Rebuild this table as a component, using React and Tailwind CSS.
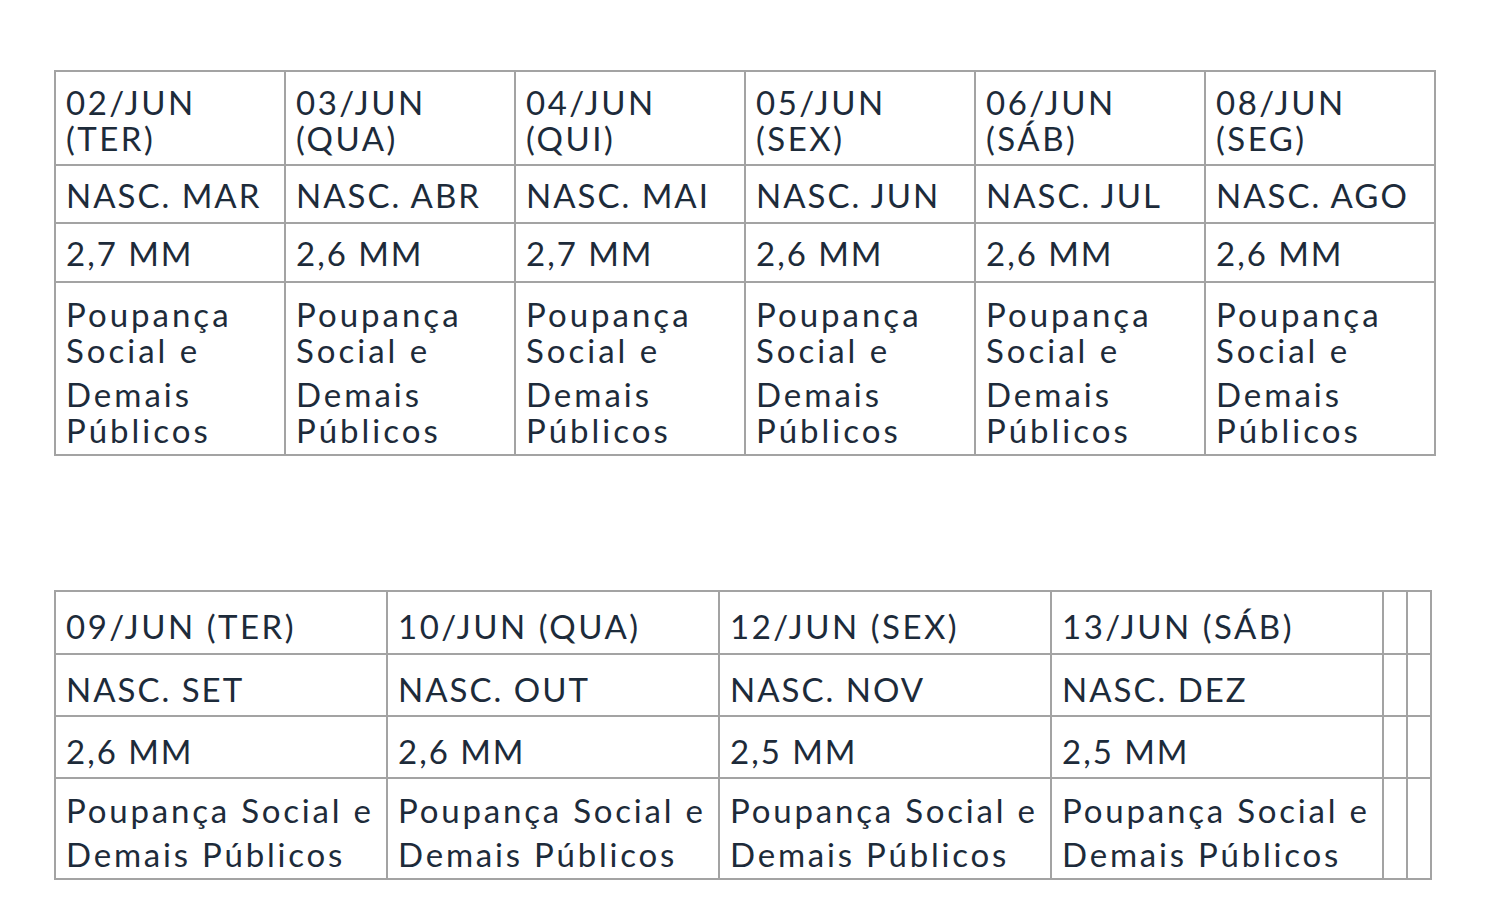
import React from 'react';

const first = [
  { date: ['02/JUN', '(TER)'], nasc: 'NASC. MAR', val: '2,7 MM' },
  { date: ['03/JUN', '(QUA)'], nasc: 'NASC. ABR', val: '2,6 MM' },
  { date: ['04/JUN', '(QUI)'], nasc: 'NASC. MAI', val: '2,7 MM' },
  { date: ['05/JUN', '(SEX)'], nasc: 'NASC. JUN', val: '2,6 MM' },
  { date: ['06/JUN', '(SÁB)'], nasc: 'NASC. JUL', val: '2,6 MM' },
  { date: ['08/JUN', '(SEG)'], nasc: 'NASC. AGO', val: '2,6 MM' },
];

const second = [
  { date: '09/JUN (TER)', nasc: 'NASC. SET', val: '2,6 MM' },
  { date: '10/JUN (QUA)', nasc: 'NASC. OUT', val: '2,6 MM' },
  { date: '12/JUN (SEX)', nasc: 'NASC. NOV', val: '2,5 MM' },
  { date: '13/JUN (SÁB)', nasc: 'NASC. DEZ', val: '2,5 MM' },
];

const cell = 'border-2 border-[#a3a3a3] pl-[10px] pr-0 align-top text-left font-normal';

const App = () => {
  return (
    <div className="min-h-screen bg-white pt-[70px] pl-[54px] text-[#1d2b3a] text-[33px] tracking-[2px] font-['Lato','Liberation_Sans',sans-serif]">
      {/* First week */}
      <table className="border-collapse table-fixed w-[1382px] leading-[36px]">
        <tbody>
          <tr>
            {first.map((d) => (
              <td key={d.nasc} className={`${cell} w-[230px] pt-[12px] pb-[8px] tracking-[2.5px]`}>
                {d.date[0]}<br />{d.date[1]}
              </td>
            ))}
          </tr>
          <tr>
            {first.map((d) => (
              <td key={d.nasc} className={`${cell} pt-[11px] pb-[9px]`}>{d.nasc}</td>
            ))}
          </tr>
          <tr>
            {first.map((d) => (
              <td key={d.nasc} className={`${cell} pt-[11px] pb-[10px]`}>{d.val}</td>
            ))}
          </tr>
          <tr>
            {first.map((d) => (
              <td key={d.nasc} className={`${cell} pt-[13px] pb-[6px] tracking-[3px]`}>
                <div>Poupança<br />Social e</div>
                <div className="mt-2">Demais<br />Públicos</div>
              </td>
            ))}
          </tr>
        </tbody>
      </table>

      {/* Second week */}
      <table className="mt-[134px] border-collapse table-fixed w-[1378px] leading-[44px]">
        <tbody>
          <tr>
            {second.map((d) => (
              <td key={d.nasc} className={`${cell} w-[332px] pt-[12px] pb-[5px] tracking-[2.5px]`}>{d.date}</td>
            ))}
            <td className={`${cell} w-[24px]`}></td>
            <td className={`${cell} w-[24px]`}></td>
          </tr>
          <tr>
            {second.map((d) => (
              <td key={d.nasc} className={`${cell} pt-[12px] pb-[4px]`}>{d.nasc}</td>
            ))}
            <td className={cell}></td>
            <td className={cell}></td>
          </tr>
          <tr>
            {second.map((d) => (
              <td key={d.nasc} className={`${cell} pt-[12px] pb-[4px]`}>{d.val}</td>
            ))}
            <td className={cell}></td>
            <td className={cell}></td>
          </tr>
          <tr>
            {second.map((d) => (
              <td key={d.nasc} className={`${cell} pt-[9px] pb-[2px] tracking-[2.8px]`}>
                Poupança Social e<br />Demais Públicos
              </td>
            ))}
            <td className={cell}></td>
            <td className={cell}></td>
          </tr>
        </tbody>
      </table>
    </div>
  );
};

export default App;
